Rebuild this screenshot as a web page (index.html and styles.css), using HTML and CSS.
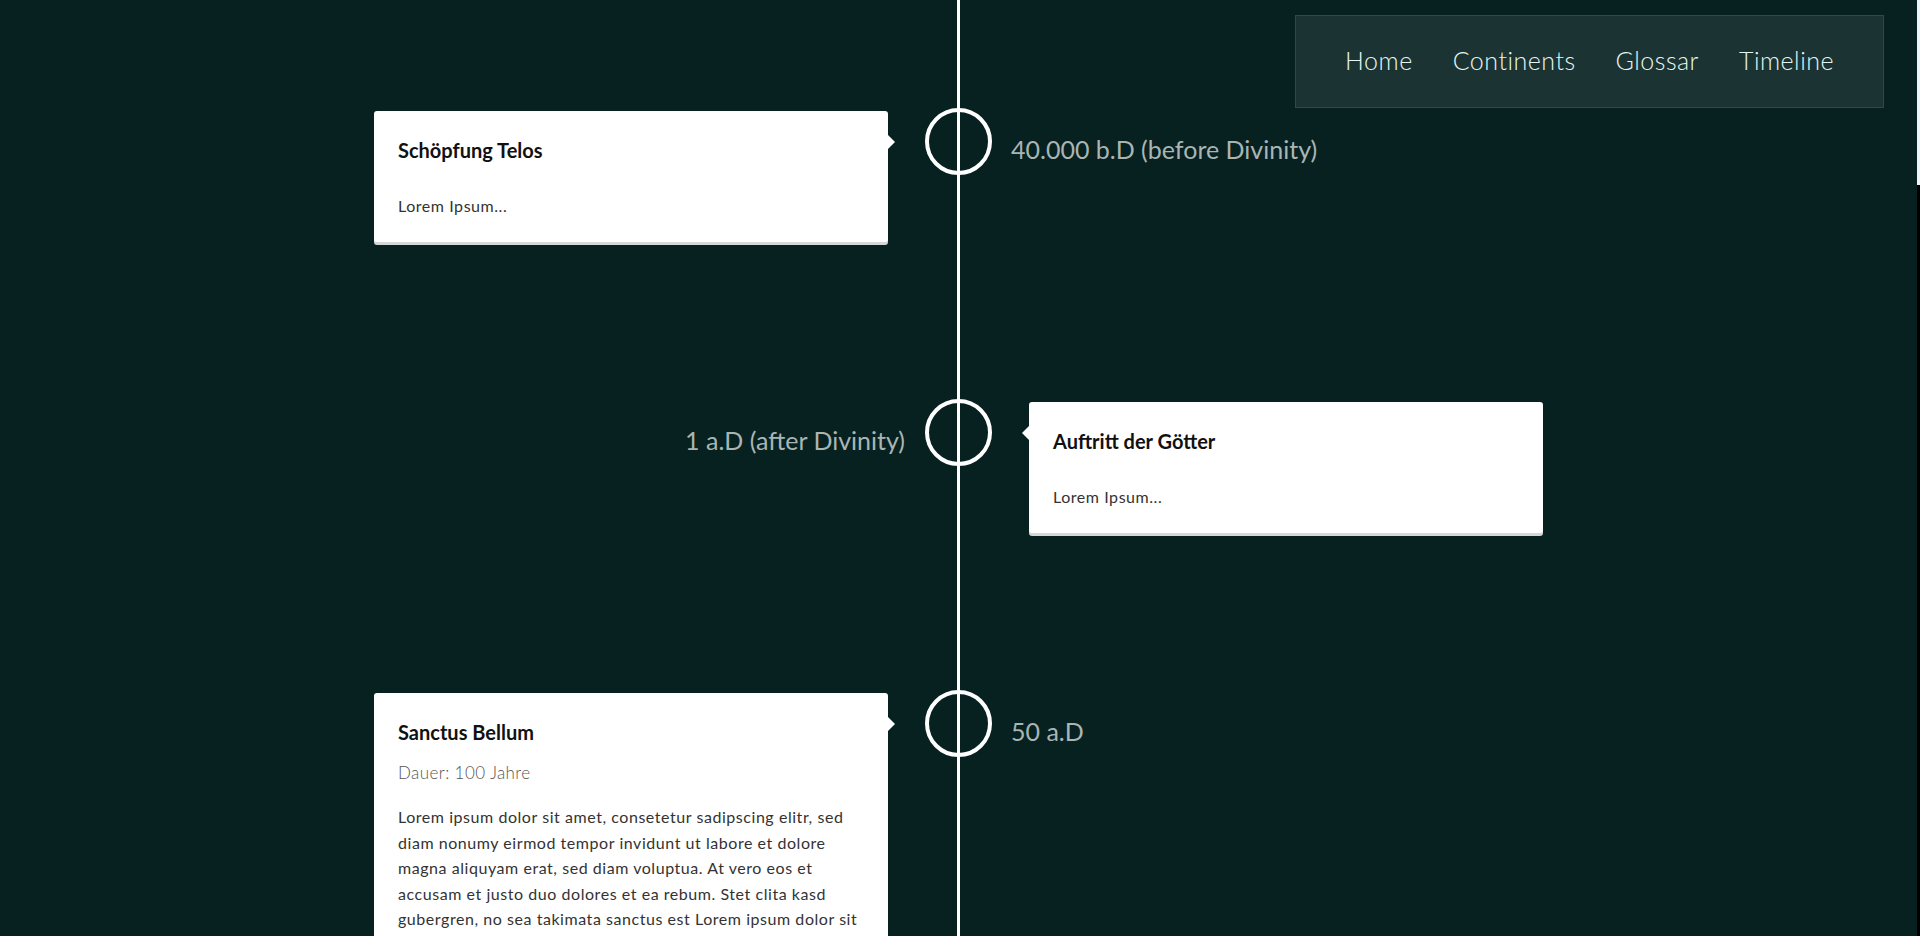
FILE: index.html
```html
<!DOCTYPE html>
<html lang="de">
<head>
<meta charset="utf-8">
<title>Timeline</title>
<link rel="stylesheet" href="styles.css">
</head>
<body>
<div class="page">
  <nav class="nav">
    <a class="nav-link" href="#">Home</a>
    <a class="nav-link" href="#">Continents</a>
    <a class="nav-link" href="#">Glossar</a>
    <a class="nav-link" href="#">Timeline</a>
  </nav>

  <main class="timeline">
    <section class="row">
      <div class="side side-left">
        <article class="card card-left">
          <h3 class="card-title">Schöpfung Telos</h3>
          <p class="card-text">Lorem Ipsum...</p>
        </article>
      </div>
      <div class="node"></div>
      <div class="side side-right">
        <div class="date date-right">40.000 b.D (before Divinity)</div>
      </div>
    </section>

    <section class="row">
      <div class="side side-left">
        <div class="date date-left">1 a.D (after Divinity)</div>
      </div>
      <div class="node"></div>
      <div class="side side-right">
        <article class="card card-right">
          <h3 class="card-title">Auftritt der Götter</h3>
          <p class="card-text">Lorem Ipsum...</p>
        </article>
      </div>
    </section>

    <section class="row">
      <div class="side side-left">
        <article class="card card-left">
          <h3 class="card-title">Sanctus Bellum</h3>
          <p class="card-meta">Dauer: 100 Jahre</p>
          <p class="card-text">Lorem ipsum dolor sit amet, consetetur sadipscing elitr, sed diam nonumy eirmod tempor invidunt ut labore et dolore magna aliquyam erat, sed diam voluptua. At vero eos et accusam et justo duo dolores et ea rebum. Stet clita kasd gubergren, no sea takimata sanctus est Lorem ipsum dolor sit amet.</p>
        </article>
      </div>
      <div class="node"></div>
      <div class="side side-right">
        <div class="date date-right">50 a.D</div>
      </div>
    </section>
  </main>
</div>
<div class="scrollbar"><div class="scrollbar-thumb"></div></div>
</body>
</html>
```
FILE: styles.css
```css
html, body {
  margin: 0;
  padding: 0;
  background: #062120;
}
body {
  font-family: Lato, "Open Sans", sans-serif;
  color: #222;
}
.page {
  margin-right: 3px;
  min-height: 936px;
}

/* navigation */
.nav {
  position: fixed;
  top: 15px;
  right: 36px;
  height: 93px;
  box-sizing: border-box;
  display: flex;
  align-items: center;
  padding: 0 29px 4px;
  background: #1c3333;
  border: 1px solid #2e4a47;
  z-index: 10;
}
.nav-link {
  padding: 0 20px;
  font-size: 25px;
  font-weight: 300;
  letter-spacing: 0.5px;
  color: #e4f6f2;
  text-decoration: none;
}

/* timeline */
.timeline {
  position: relative;
  padding-top: 108px;
}
.timeline::before {
  content: "";
  position: absolute;
  top: 0;
  bottom: 0;
  left: 50%;
  width: 3px;
  margin-left: -1.5px;
  background: #fff;
}
.row {
  display: grid;
  grid-template-columns: 1fr 67px 1fr;
  align-items: start;
  min-height: 291px;
}
.side {
  display: flex;
}
.side-left {
  justify-content: flex-end;
}
.side-right {
  justify-content: flex-start;
}
.node {
  width: 67px;
  height: 67px;
  box-sizing: border-box;
  border: 4px solid #fff;
  border-radius: 50%;
  position: relative;
  z-index: 1;
}

/* date labels */
.date {
  margin-top: 26px;
  font-size: 25px;
  line-height: 30px;
  font-weight: 400;
  color: #aab5b3;
  white-space: nowrap;
}
.date-right { margin-left: 19px; }
.date-left { margin-right: 20px; }

/* cards */
.card {
  position: relative;
  width: 514px;
  box-sizing: border-box;
  margin-top: 3px;
  padding: 28px 24px 23px;
  background: #fff;
  border-radius: 3px;
  box-shadow: 0 3px 0 #d6d6d6;
}
.card-left { margin-right: 37px; }
.card-right { margin-left: 37px; }
.card::after {
  content: "";
  position: absolute;
  top: 24px;
  border: 7px solid transparent;
}
.card-left::after {
  left: 100%;
  border-left-color: #fff;
}
.card-right::after {
  right: 100%;
  border-right-color: #fff;
}
.card-title {
  margin: 0 0 19px;
  font-size: 20px;
  line-height: 23px;
  font-weight: 700;
  color: #111;
}
.card-title + .card-text {
  margin-top: 31px;
}
.card-meta {
  margin: 0 0 21px;
  font-size: 17px;
  line-height: 20px;
  font-weight: 300;
  letter-spacing: 0.4px;
  color: #555;
}
.card-text {
  margin: 0;
  font-size: 16px;
  line-height: 25.5px;
  letter-spacing: 0.55px;
  color: #333;
}

/* thin custom scrollbar */
.scrollbar {
  position: fixed;
  top: 0;
  right: 0;
  width: 3px;
  height: 100%;
  background: #000;
}
.scrollbar-thumb {
  height: 185px;
  background: #eef5fb;
}
```
